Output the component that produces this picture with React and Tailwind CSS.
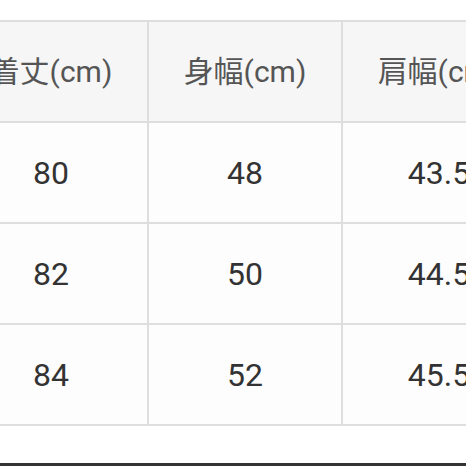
export default function App() {
  const headers = ["着丈(cm)", "身幅(cm)", "肩幅(cm)"];
  const rows = [
    ["80", "48", "43.5"],
    ["82", "50", "44.5"],
    ["84", "52", "45.5"],
  ];
  const font = { fontFamily: 'Roboto, "Noto Sans CJK JP", sans-serif' };
  return (
    <div className="w-[466px] h-[466px] overflow-hidden bg-white flex flex-col" style={font}>
      <div className="mt-[20px] ml-[-47px] w-max grid grid-cols-[192px_192px_192px] gap-[2px] p-[2px] bg-[#dedede]">
        {headers.map((h) => (
          <div key={h} className="h-[99px] bg-[#f6f6f6] flex items-center justify-center text-[30px] text-[#555] whitespace-nowrap">
            {h}
          </div>
        ))}
        {rows.flat().map((v, i) => (
          <div key={i} className="h-[99px] bg-[#fdfdfd] flex items-center justify-center text-[32px] text-[#333]">
            {v}
          </div>
        ))}
      </div>
      <div className="mt-auto h-[3px] bg-[#333]" />
    </div>
  );
}
